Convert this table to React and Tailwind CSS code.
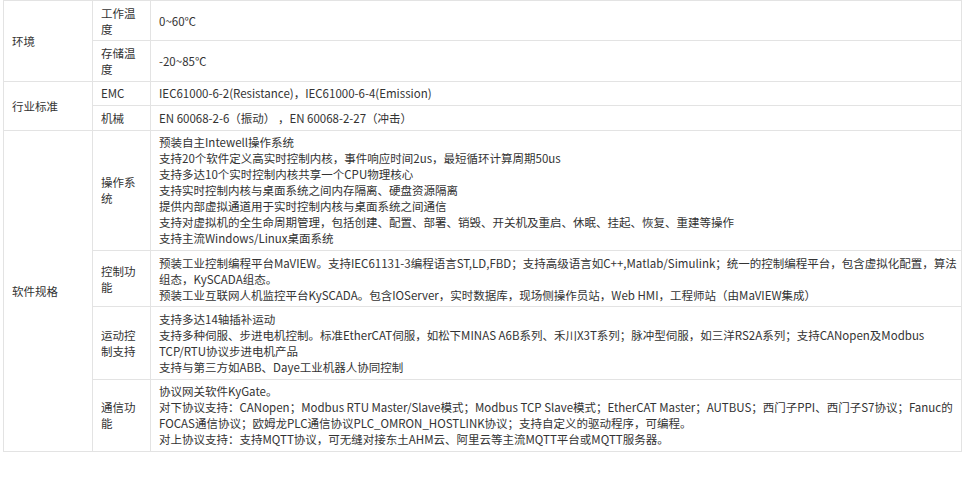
const rows = [
  {
    group: '环境',
    span: 2,
    items: [
      { name: '工作温度', lines: ['0~60℃'] },
      { name: '存储温度', lines: ['-20~85℃'] },
    ],
  },
  {
    group: '行业标准',
    span: 2,
    items: [
      { name: 'EMC', lines: ['IEC61000-6-2(Resistance)，IEC61000-6-4(Emission)'] },
      { name: '机械', lines: ['EN 60068-2-6（振动） ，EN 60068-2-27（冲击）'] },
    ],
  },
  {
    group: '软件规格',
    span: 4,
    items: [
      {
        name: '操作系统',
        lines: [
          '预装自主Intewell操作系统',
          '支持20个软件定义高实时控制内核，事件响应时间2us，最短循环计算周期50us',
          '支持多达10个实时控制内核共享一个CPU物理核心',
          '支持实时控制内核与桌面系统之间内存隔离、硬盘资源隔离',
          '提供内部虚拟通道用于实时控制内核与桌面系统之间通信',
          '支持对虚拟机的全生命周期管理，包括创建、配置、部署、销毁、开关机及重启、休眠、挂起、恢复、重建等操作',
          '支持主流Windows/Linux桌面系统',
        ],
      },
      {
        name: '控制功能',
        lines: [
          '预装工业控制编程平台MaVIEW。支持IEC61131-3编程语言ST,LD,FBD；支持高级语言如C++,Matlab/Simulink；统一的控制编程平台，包含虚拟化配置，算法组态，KySCADA组态。',
          '预装工业互联网人机监控平台KySCADA。包含IOServer，实时数据库，现场侧操作员站，Web HMI，工程师站（由MaVIEW集成）',
        ],
      },
      {
        name: '运动控制支持',
        lines: [
          '支持多达14轴插补运动',
          '支持多种伺服、步进电机控制。标准EtherCAT伺服，如松下MINAS A6B系列、禾川X3T系列；脉冲型伺服，如三洋RS2A系列；支持CANopen及Modbus TCP/RTU协议步进电机产品',
          '支持与第三方如ABB、Daye工业机器人协同控制',
        ],
      },
      {
        name: '通信功能',
        lines: [
          '协议网关软件KyGate。',
          '对下协议支持：CANopen；Modbus RTU Master/Slave模式；Modbus TCP Slave模式；EtherCAT Master；AUTBUS；西门子PPI、西门子S7协议；Fanuc的FOCAS通信协议；欧姆龙PLC通信协议PLC_OMRON_HOSTLINK协议；支持自定义的驱动程序，可编程。',
          '对上协议支持：支持MQTT协议，可无缝对接东土AHM云、阿里云等主流MQTT平台或MQTT服务器。',
        ],
      },
    ],
  },
]

export default function App() {
  return (
    <div className="w-[965px] h-[478px] bg-white pl-[3px] font-['Noto_Sans_CJK_SC',sans-serif] text-[11.5px] leading-[16px] text-[#333]">
      <table className="w-[959px] table-fixed border-collapse">
        <colgroup>
          <col className="w-[89px]" />
          <col className="w-[58px]" />
          <col />
        </colgroup>
        <tbody>
          {rows.map((g) =>
            g.items.map((item, i) => (
              <tr key={item.name}>
                {i === 0 && (
                  <td rowSpan={g.span} className="border border-[#e3e3e3] px-2 py-[3.7px] align-middle">
                    {g.group}
                  </td>
                )}
                <td className="border border-[#e3e3e3] px-2 py-[3.7px] align-middle break-all">{item.name}</td>
                <td className="border border-[#e3e3e3] pl-2 pr-[3px] py-[3.7px] align-middle">
                  {item.lines.map((l) => (
                    <div key={l}>{l}</div>
                  ))}
                </td>
              </tr>
            ))
          )}
        </tbody>
      </table>
    </div>
  )
}
